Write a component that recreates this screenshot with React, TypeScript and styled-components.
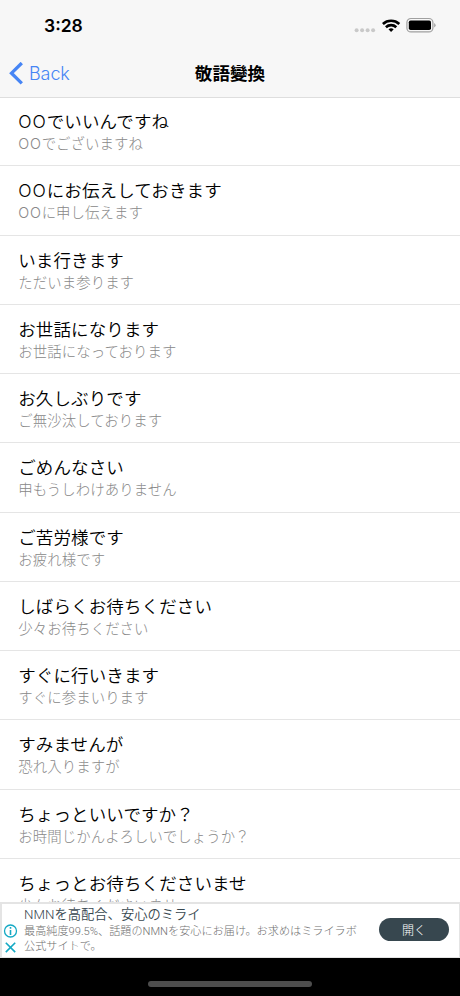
import React from 'react';
import styled, { createGlobalStyle } from 'styled-components';

const GlobalStyle = createGlobalStyle`
  * { box-sizing: border-box; }
  body { margin: 0; background: #fff; }
`;

const Screen = styled.div`
  width: 460px;
  height: 996px;
  display: flex;
  flex-direction: column;
  overflow: hidden;
  background: #fff;
  color: #000;
  font-family: Inter, 'Noto Sans CJK JP', sans-serif;
`;

const Header = styled.header`
  flex: none;
  height: 98px;
  background: #f7f7f7;
  border-bottom: 1px solid #dedede;
`;

const StatusBar = styled.div`
  height: 50px;
  padding: 1px 24px 0 44px;
  display: flex;
  align-items: center;
  justify-content: space-between;
`;

const Clock = styled.span`
  font-size: 17.5px;
  font-weight: 600;
  line-height: 20px;
`;

const StatusIcons = styled.div`
  display: flex;
  align-items: center;
  svg { display: block; }
`;

const NavBar = styled.nav`
  height: 47px;
  display: grid;
  grid-template-columns: 1fr auto 1fr;
  align-items: center;
`;

const BackButton = styled.button`
  display: flex;
  align-items: center;
  gap: 6px;
  padding: 0 0 0 9px;
  border: 0;
  background: none;
  color: #4685f5;
  font: 350 18px/24px Inter, sans-serif;
  letter-spacing: -0.1px;
`;

const NavTitle = styled.h1`
  margin: 0;
  font: 700 17.6px/22px 'Noto Sans CJK JP', sans-serif;
  padding-bottom: 2px;
`;

const List = styled.ul`
  flex: 1;
  min-height: 0;
  margin: 0;
  padding: 0;
  overflow: hidden;
  list-style: none;
`;

const Row = styled.li`
  height: 69.25px;
  padding: 12.2px 18px 0 18.2px;
  border-bottom: 1px solid #e5e5e5;

  &:first-child {
    height: 68.3px;
    padding-top: 11.2px;
  }
`;

const Phrase = styled.div`
  font-size: 17.5px;
  font-weight: 350;
  letter-spacing: 0.12px;
  line-height: 25px;
  color: #000;
  white-space: nowrap;
`;

const Polite = styled.div`
  font-size: 14.4px;
  font-weight: 300;
  letter-spacing: 0.1px;
  line-height: 20px;
  color: #888;
  white-space: nowrap;
`;

const Latin = styled.span`
  letter-spacing: 0.055em;
`;

const AdBanner = styled.aside`
  flex: none;
  height: 56px;
  display: flex;
  border: 1px solid #e4e4e4;
  border-width: 2px 1px 1px 2px;
  background: #fff;
`;

const AdControls = styled.div`
  width: 22px;
  padding: 20px 0 0 1px;
  svg { display: block; }
`;

const AdCopy = styled.div`
  flex: 1;
  font-family: Roboto, 'Noto Sans CJK JP', sans-serif;
`;

const AdTitle = styled.div`
  padding-top: 1px;
  font-size: 13.3px;
  font-weight: 350;
  line-height: 19px;
  color: #37474f;
  white-space: nowrap;
`;

const AdText = styled.div`
  padding-top: 1px;
  font-size: 11.15px;
  font-weight: 300;
  line-height: 14.5px;
  color: #707070;
  white-space: nowrap;
`;

const AdButton = styled.button`
  width: 70px;
  height: 23px;
  margin: 14px 10px 0 0;
  padding: 0;
  border: 0;
  border-radius: 12px;
  background: #37474f;
  color: #fff;
  font: 300 12px/23px 'Noto Sans CJK JP', sans-serif;
`;

const HomeArea = styled.footer`
  flex: none;
  height: 38px;
  padding-top: 23px;
  background: #000;
`;

const HomeIndicator = styled.div`
  width: 164px;
  height: 6px;
  margin: 0 auto;
  border-radius: 3px;
  background: #4d4d4d;
`;

const phrases: [string, string][] = [
  ['OOでいいんですね', 'OOでございますね'],
  ['OOにお伝えしておきます', 'OOに申し伝えます'],
  ['いま行きます', 'ただいま参ります'],
  ['お世話になります', 'お世話になっております'],
  ['お久しぶりです', 'ご無沙汰しております'],
  ['ごめんなさい', '申もうしわけありません'],
  ['ご苦労様です', 'お疲れ様です'],
  ['しばらくお待ちください', '少々お待ちください'],
  ['すぐに行いきます', 'すぐに参まいります'],
  ['すみませんが', '恐れ入りますが'],
  ['ちょっといいですか？', 'お時間じかんよろしいでしょうか？'],
  ['ちょっとお待ちくださいませ', '少々お待ちくださいませ'],
];

/* A leading "OO" placeholder is set slightly wider than the kana after it. */
const Spaced = ({ text }: { text: string }) =>
  text.startsWith('OO') ? (
    <>
      <Latin>OO</Latin>
      {text.slice(2)}
    </>
  ) : (
    <>{text}</>
  );

const SystemIcons = () => (
  <svg width="82" height="18" viewBox="0 0 82 18">
    {[2.3, 7.8, 13.3, 18.8].map((x) => (
      <circle key={x} cx={x + 0.3} cy="13.2" r="2" fill="#c9c9c9" />
    ))}
    <g fill="none" stroke="#000" strokeWidth="2.7">
      <path d="M28.9 6.9a12.3 12.3 0 0 1 16.4 0" />
      <path d="M31.9 10.2a7.8 7.8 0 0 1 10.4 0" />
    </g>
    <path d="M37.1 14.9l-2.6-2.6a3.9 3.9 0 0 1 5.2 0z" fill="#000" />
    <rect x="52.9" y="1.5" width="26" height="13.4" rx="4" fill="none" stroke="#a0a0a0" strokeWidth="1.2" />
    <rect x="54.8" y="3.4" width="22.2" height="9.6" rx="1.8" fill="#000" />
    <path d="M80.2 6a2.6 2.6 0 0 1 0 4.6z" fill="#a0a0a0" />
  </svg>
);

export default function App() {
  return (
    <Screen>
      <GlobalStyle />
      <Header>
        <StatusBar>
          <Clock>3:28</Clock>
          <StatusIcons>
            <SystemIcons />
          </StatusIcons>
        </StatusBar>
        <NavBar>
          <BackButton>
            <svg width="14" height="24" viewBox="0 0 14 24">
              <path d="M12.8 1L2.5 11.2l10.3 10.2" fill="none" stroke="#4685f5" strokeWidth="3.3" />
            </svg>
            Back
          </BackButton>
          <NavTitle>敬語變換</NavTitle>
        </NavBar>
      </Header>
      <List>
        {phrases.map(([phrase, polite]) => (
          <Row key={phrase}>
            <Phrase>
              <Spaced text={phrase} />
            </Phrase>
            <Polite>
              <Spaced text={polite} />
            </Polite>
          </Row>
        ))}
      </List>
      <AdBanner>
        <AdControls>
          <svg width="16" height="34" viewBox="0 0 16 34" fill="none" stroke="#14a9c4">
            <circle cx="7.5" cy="7" r="6" strokeWidth="1.3" />
            <path d="M7.5 6v5M7.5 3v1.7" strokeWidth="1.6" />
            <path d="M2.8 18.7l9.4 9.4M12.2 18.7l-9.4 9.4" strokeWidth="1.6" />
          </svg>
        </AdControls>
        <AdCopy>
          <AdTitle>NMNを高配合、安心のミライ</AdTitle>
          <AdText>
            最高純度99.5%、話題のNMNを安心にお届け。お求めはミライラボ
            <br />
            公式サイトで。
          </AdText>
        </AdCopy>
        <AdButton>開く</AdButton>
      </AdBanner>
      <HomeArea>
        <HomeIndicator />
      </HomeArea>
    </Screen>
  );
}
